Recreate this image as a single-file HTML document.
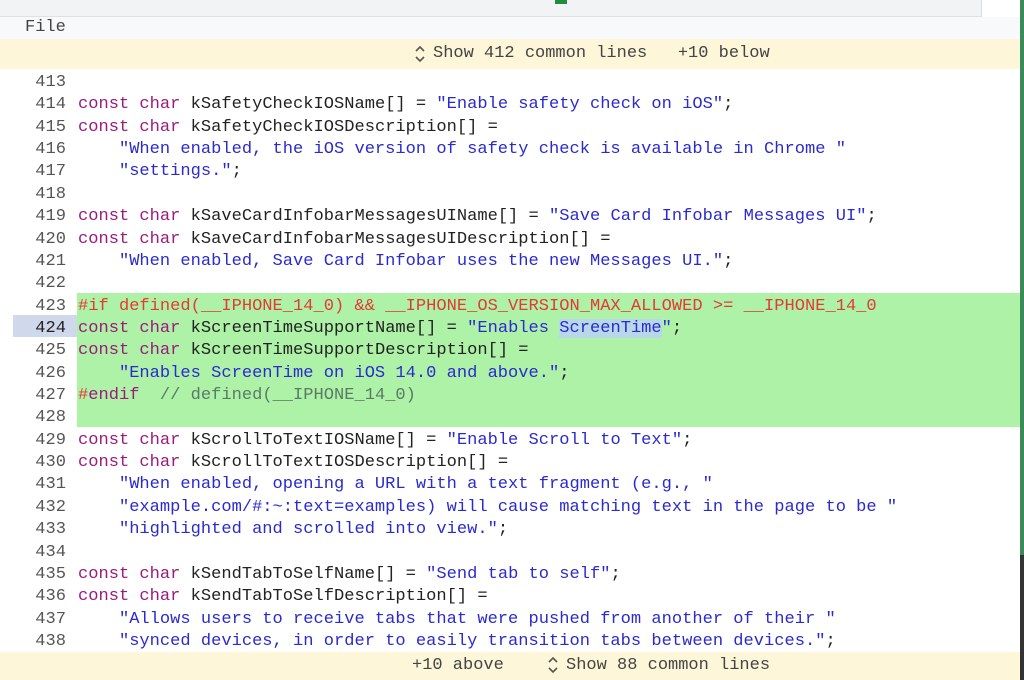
<!DOCTYPE html>
<html><head><meta charset="utf-8"><style>
body{margin:0;width:1024px;height:680px;overflow:hidden;background:#fff;position:relative;font-family:"Liberation Mono",monospace;}
.top{position:absolute;left:0;top:0;width:981px;height:16px;background:#f1f3f4;border-right:1px solid #dadce0;border-bottom:1px solid #e0e0e0;}
.file{position:absolute;left:0;top:17px;width:1020px;height:22px;background:#f8f9fa;font-size:17px;color:#444;}
.file span{position:absolute;left:25px;top:1px;}
.ybar{position:absolute;left:0;width:1020px;background:#fef6d8;color:#444;font-size:17px;}
.strip{position:absolute;left:1020px;top:0;width:4px;height:555px;background:#3c8a5a;}
.strip2{position:absolute;left:1020px;top:555px;width:4px;height:125px;background:#333;}
.green{position:absolute;left:77px;top:293px;width:943px;height:134px;background:#aef2a8;}
.hl{position:absolute;left:13px;top:315px;width:64px;height:22px;background:#d0d8ec;}
.code{position:absolute;left:0;top:72px;font-size:17.07px;line-height:22.36px;white-space:pre;}
.n{display:inline-block;width:66px;text-align:right;color:#555;margin-right:12px;}
.k{color:#9c1a7c}.s{color:#2a2ad0}.p{color:#e53935}.c{color:#5a7a66}.t{color:#222}
.sel{background:#b8d8ea}
svg{position:absolute}
</style></head><body>
<div class="top"></div>
<div style="position:absolute;left:555px;top:0;width:12px;height:4px;background:#1e8e3e"></div>
<div class="strip"></div><div class="strip2"></div>
<div class="file"><span>File</span></div>
<div class="ybar" style="top:39px;height:30px"><svg style="left:414px;top:5px" width="12" height="20"><path d="M2 7L6 3L10 7M2 13L6 17L10 13" fill="none" stroke="#555" stroke-width="1.6"/></svg><span style="position:absolute;left:433px;top:5px">Show 412 common lines &nbsp;&nbsp;+10 below</span></div>
<div class="green"></div><div class="hl"></div>
<div class="code"><span class="n">413</span>
<span class="n">414</span><span class="k">const char</span><span class="t"> kSafetyCheckIOSName[] = </span><span class="s">"Enable safety check on iOS"</span><span class="t">;</span>
<span class="n">415</span><span class="k">const char</span><span class="t"> kSafetyCheckIOSDescription[] =</span>
<span class="n">416</span><span class="s">    "When enabled, the iOS version of safety check is available in Chrome "</span>
<span class="n">417</span><span class="s">    "settings."</span><span class="t">;</span>
<span class="n">418</span>
<span class="n">419</span><span class="k">const char</span><span class="t"> kSaveCardInfobarMessagesUIName[] = </span><span class="s">"Save Card Infobar Messages UI"</span><span class="t">;</span>
<span class="n">420</span><span class="k">const char</span><span class="t"> kSaveCardInfobarMessagesUIDescription[] =</span>
<span class="n">421</span><span class="s">    "When enabled, Save Card Infobar uses the new Messages UI."</span><span class="t">;</span>
<span class="n">422</span>
<span class="n">423</span><span class="p">#if defined(__IPHONE_14_0) &amp;&amp; __IPHONE_OS_VERSION_MAX_ALLOWED &gt;= __IPHONE_14_0</span>
<span class="n" style="color:#222">424</span><span class="k">const char</span><span class="t"> kScreenTimeSupportName[] = </span><span class="s">"Enables <span class="sel">ScreenTime</span>"</span><span class="t">;</span>
<span class="n">425</span><span class="k">const char</span><span class="t"> kScreenTimeSupportDescription[] =</span>
<span class="n">426</span><span class="s">    "Enables ScreenTime on iOS 14.0 and above."</span><span class="t">;</span>
<span class="n">427</span><span class="p">#</span><span class="k">endif</span><span class="c">  // defined(__IPHONE_14_0)</span>
<span class="n">428</span>
<span class="n">429</span><span class="k">const char</span><span class="t"> kScrollToTextIOSName[] = </span><span class="s">"Enable Scroll to Text"</span><span class="t">;</span>
<span class="n">430</span><span class="k">const char</span><span class="t"> kScrollToTextIOSDescription[] =</span>
<span class="n">431</span><span class="s">    "When enabled, opening a URL with a text fragment (e.g., "</span>
<span class="n">432</span><span class="s">    "example.com/#:~:text=examples) will cause matching text in the page to be "</span>
<span class="n">433</span><span class="s">    "highlighted and scrolled into view."</span><span class="t">;</span>
<span class="n">434</span>
<span class="n">435</span><span class="k">const char</span><span class="t"> kSendTabToSelfName[] = </span><span class="s">"Send tab to self"</span><span class="t">;</span>
<span class="n">436</span><span class="k">const char</span><span class="t"> kSendTabToSelfDescription[] =</span>
<span class="n">437</span><span class="s">    "Allows users to receive tabs that were pushed from another of their "</span>
<span class="n">438</span><span class="s">    "synced devices, in order to easily transition tabs between devices."</span><span class="t">;</span></div>
<div class="ybar" style="top:652px;height:28px"><span style="position:absolute;left:412px;top:4px">+10 above</span><svg style="left:547px;top:3px" width="12" height="20"><path d="M2 7L6 3L10 7M2 13L6 17L10 13" fill="none" stroke="#555" stroke-width="1.6"/></svg><span style="position:absolute;left:566px;top:4px">Show 88 common lines</span></div>
</body></html>
